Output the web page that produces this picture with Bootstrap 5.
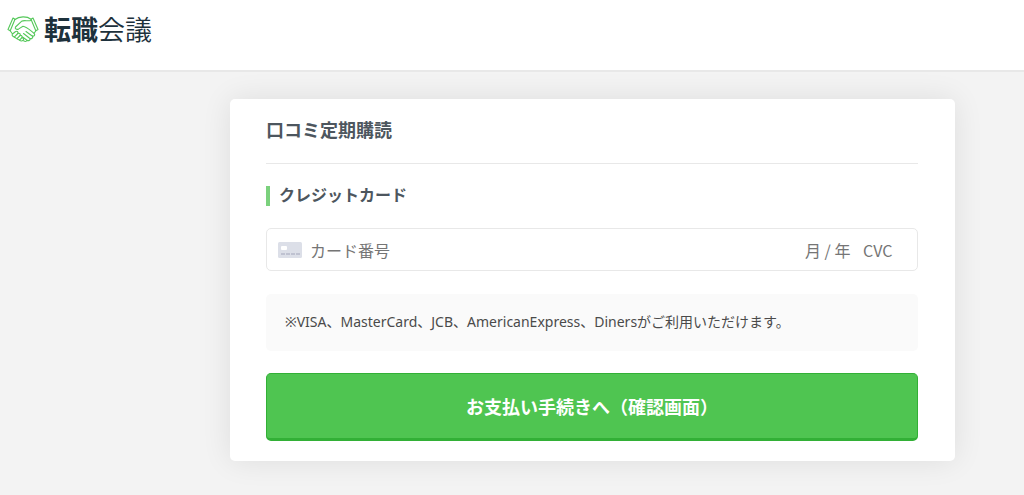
<!DOCTYPE html>
<html lang="ja">
<head>
<meta charset="utf-8">
<meta name="viewport" content="width=device-width, initial-scale=1">
<title>転職会議</title>
<link href="https://cdn.jsdelivr.net/npm/bootstrap@5.3.0/dist/css/bootstrap.min.css" rel="stylesheet">
<style>
body { background: #f3f3f3; color: #4d565e; font-family: "Noto Sans CJK JP", sans-serif; }
.site-header { background: #fff; border-bottom: 2px solid #e8e8e8; padding: 9px 7px 21px; }
.brand-link { color: #1d313c; font-size: 27px; line-height: 40px; gap: 5px; }
.brand-light { font-weight: 350; }
.page-main { padding: 27px 69px 34px 230px; }
.pay-card { border: 0; border-radius: 5px; box-shadow: 0 0 30px rgba(0, 0, 0, .09); padding: 15px 37px 20px 36px; }
.pay-title { font-size: 18px; line-height: 30px; padding-bottom: 19px; margin-bottom: 22px; border-bottom: 1px solid #e8e8e8; }
.pay-subtitle { font-size: 16px; line-height: 16px; border-left: 4px solid #7bd17d; padding: 0 0 4px 9px; margin-bottom: 22px; }
.card-fields { border: 1px solid #e8e8e8; border-radius: 5px; height: 43px; padding: 1px 22px 0 11px; margin-bottom: 23px; }
.card-fields input { border: 0; padding: 0; background: none; font-size: 16px; line-height: 24px; color: #4d565e; outline-offset: 4px; min-width: 0; }
.card-fields input::placeholder { color: #757575; opacity: 1; }
.in-exp { width: 46px; margin-right: 12px; }
.in-cvc { width: 32px; }
.pay-note { background: #fafafa; border-radius: 5px; font: 14px/20px "Noto Sans", "Noto Sans CJK JP", sans-serif; color: #4a4a4a; padding: 18px 19px 19px; margin-bottom: 22px; }
.btn-pay { --bs-btn-color: #fff; --bs-btn-bg: #4fc551; --bs-btn-border-color: #32b036; --bs-btn-hover-color: #fff; --bs-btn-hover-bg: #45b948; --bs-btn-hover-border-color: #32a835; --bs-btn-active-color: #fff; --bs-btn-active-bg: #3eac40; --bs-btn-border-radius: 5px; --bs-btn-padding-y: 19px; border-bottom-width: 3px; font-size: 18px; line-height: 26px; font-weight: 700; }
</style>
</head>
<body>
<header class="site-header">
  <a class="brand-link d-inline-flex align-items-center text-decoration-none" href="#">
    <svg width="32" height="28" viewBox="0 0 32 28" fill="none" stroke="#55c85a" stroke-width="1.1" stroke-linejoin="round" stroke-linecap="round" aria-hidden="true">
      <path d="M6 3 1 14.500l2.200 1.200L8 4.200z"/>
      <path d="M26 3l5 11.500-2.200 1.200L24 4.200z"/>
      <path d="M8 4.500C12 1 20 1 24 4.200"/>
      <path d="M24 5.500c-4 1-6.500-.8-9.500.8L8.500 12c-1 1.800 1.200 3 3.200 1.900l4.300-2.600c3.500.2 7.500 4.200 11 7 1.800 1.800-.2 3.700-2.200 2.400L19 16.500"/>
      <path d="M25.500 21c1 1.700-1 3.500-2.900 2.200L16.500 18.500M23 23.700c.5 1.500-1.500 2.600-3 1.500L15.500 22M20 25.500c-.7 1.200-2 1.200-3.400.2"/>
      <path d="M3.200 15.700 5.500 19l2.800-2.300c1.700-1.200 3.200.2 2.500 1.800 1.700-.8 3 .5 2.300 2 1.700-.4 2.500.9 1.700 2.300 1.600-.1 2.300 1.100 1.400 2.300-1.200 1.300-2.600 1-3.900 0L6.300 21.500c-1.300-.8-1.400-1.700-.8-2.500"/>
      <path d="m10.800 18.500-3.300 3.300m5.600-1.300-3.100 3.200m4.800-.9-2.200 2.200M28.800 15.700l-1.600 2.500"/>
    </svg>
    <span class="d-inline-flex"><span class="fw-bold">転職</span><span class="brand-light">会議</span></span>
  </a>
</header>
<main class="page-main">
  <form class="pay-card card" onsubmit="return false">
    <h1 class="pay-title fw-bold">口コミ定期購読</h1>
    <h2 class="pay-subtitle fw-bold">クレジットカード</h2>
    <div class="card-fields d-flex align-items-center">
      <svg class="flex-shrink-0 me-2" width="24" height="16" viewBox="0 0 24 16" aria-hidden="true">
        <rect width="24" height="16" rx="1.500" fill="#dcdfe8"/>
        <rect x="3" y="4" width="6" height="4" rx="1" fill="#fff"/>
        <path d="M3 12h19" stroke="#b5b9c9" stroke-width="1.500" stroke-dasharray="4 1"/>
      </svg>
      <input class="flex-grow-1" type="text" inputmode="numeric" placeholder="カード番号" aria-label="カード番号">
      <input class="in-exp" type="text" inputmode="numeric" placeholder="月 / 年" aria-label="月 / 年">
      <input class="in-cvc" type="text" inputmode="numeric" placeholder="CVC" aria-label="CVC">
    </div>
    <p class="pay-note">※VISA、MasterCard、JCB、AmericanExpress、Dinersがご利用いただけます。</p>
    <button class="btn btn-pay w-100" type="submit">お支払い手続きへ（確認画面）</button>
  </form>
</main>
<script src="https://cdn.jsdelivr.net/npm/bootstrap@5.3.0/dist/js/bootstrap.bundle.min.js"></script>
</body>
</html>
